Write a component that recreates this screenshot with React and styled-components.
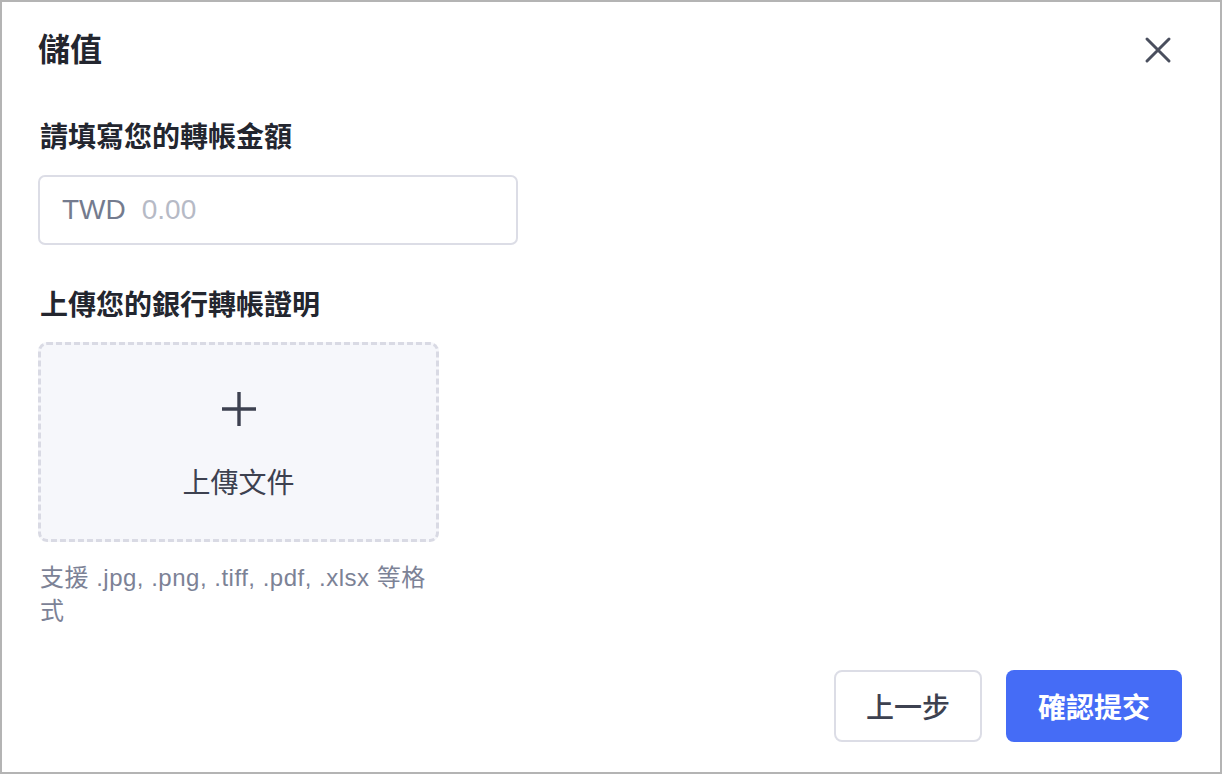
import React from "react";
import styled, { createGlobalStyle } from "styled-components";

const Global = createGlobalStyle`
  html, body { margin: 0; padding: 0; background: #ffffff; }
  * { box-sizing: border-box; }
  body { font-family: "Liberation Sans", "Noto Sans CJK TC", sans-serif; }
`;

const Dialog = styled.div`
  width: 1222px;
  height: 774px;
  border: 2px solid #b4b4b4;
  background: #ffffff;
  padding: 26px 38px 30px 36px;
  display: flex;
  flex-direction: column;
`;

const Header = styled.div`
  display: flex;
  align-items: center;
  justify-content: space-between;
  height: 44px;
`;

const Title = styled.h1`
  margin: 0;
  font-size: 32px;
  line-height: 44px;
  font-weight: 700;
  color: #23262f;
`;

const CloseButton = styled.button`
  border: none;
  background: none;
  padding: 0;
  width: 30px;
  height: 30px;
  margin-right: 9px;
  display: flex;
  align-items: center;
  justify-content: center;
  cursor: pointer;
`;

const Label = styled.div`
  margin-top: ${(p) => p.$top}px;
  font-size: 28px;
  line-height: 40px;
  font-weight: 700;
  color: #23262f;
  padding-left: 2px;
`;

const InputBox = styled.div`
  margin-top: 17px;
  width: 480px;
  height: 70px;
  border: 2px solid #dcdde6;
  border-radius: 7px;
  display: flex;
  align-items: center;
  padding-left: 22px;
  gap: 16px;
  font-size: 28px;
`;

const Currency = styled.span`
  color: #747b8e;
`;

const Placeholder = styled.span`
  color: #b6bac6;
`;

const Upload = styled.div`
  margin-top: 16px;
  width: 401px;
  height: 200px;
  border: 3px dashed #d9dae4;
  border-radius: 9px;
  background: #f6f7fb;
  display: flex;
  flex-direction: column;
  align-items: center;
  padding-top: 46px;
`;

const UploadText = styled.div`
  margin-top: 37px;
  font-size: 28px;
  line-height: 40px;
  color: #3d4150;
`;

const Hint = styled.div`
  margin-top: 19px;
  width: 400px;
  padding-left: 2px;
  font-size: 24px;
  letter-spacing: 0.5px;
  line-height: 33px;
  color: #7c8296;
`;

const Footer = styled.div`
  margin-top: auto;
  display: flex;
  justify-content: flex-end;
  gap: 24px;
`;

const Button = styled.button`
  height: 72px;
  width: ${(p) => p.$w}px;
  border-radius: 8px;
  font-family: "Liberation Sans", "Noto Sans CJK TC", sans-serif;
  font-size: 28px;
  font-weight: ${(p) => (p.$primary ? 700 : 500)};
  border: ${(p) => (p.$primary ? "none" : "2px solid #dcdde6")};
  background: ${(p) => (p.$primary ? "#456cf6" : "#ffffff")};
  color: ${(p) => (p.$primary ? "#ffffff" : "#3d4150")};
  cursor: pointer;
`;

export default function App() {
  return (
    <>
      <Global />
      <Dialog>
        <Header>
          <Title>儲值</Title>
          <CloseButton aria-label="close">
            <svg width="28" height="28" viewBox="0 0 28 28">
              <path d="M3 3 L25 25 M25 3 L3 25" stroke="#4a4f5e" strokeWidth="3" strokeLinecap="round" />
            </svg>
          </CloseButton>
        </Header>
        <Label $top={46}>請填寫您的轉帳金額</Label>
        <InputBox>
          <Currency>TWD</Currency>
          <Placeholder>0.00</Placeholder>
        </InputBox>
        <Label $top={41}>上傳您的銀行轉帳證明</Label>
        <Upload>
          <svg width="36" height="36" viewBox="0 0 36 36">
            <path d="M18 1 V35 M1 18 H35" stroke="#3d4150" strokeWidth="3.4" />
          </svg>
          <UploadText>上傳文件</UploadText>
        </Upload>
        <Hint>支援 .jpg, .png, .tiff, .pdf, .xlsx 等格式</Hint>
        <Footer>
          <Button $w={148}>上一步</Button>
          <Button $w={176} $primary>確認提交</Button>
        </Footer>
      </Dialog>
    </>
  );
}
